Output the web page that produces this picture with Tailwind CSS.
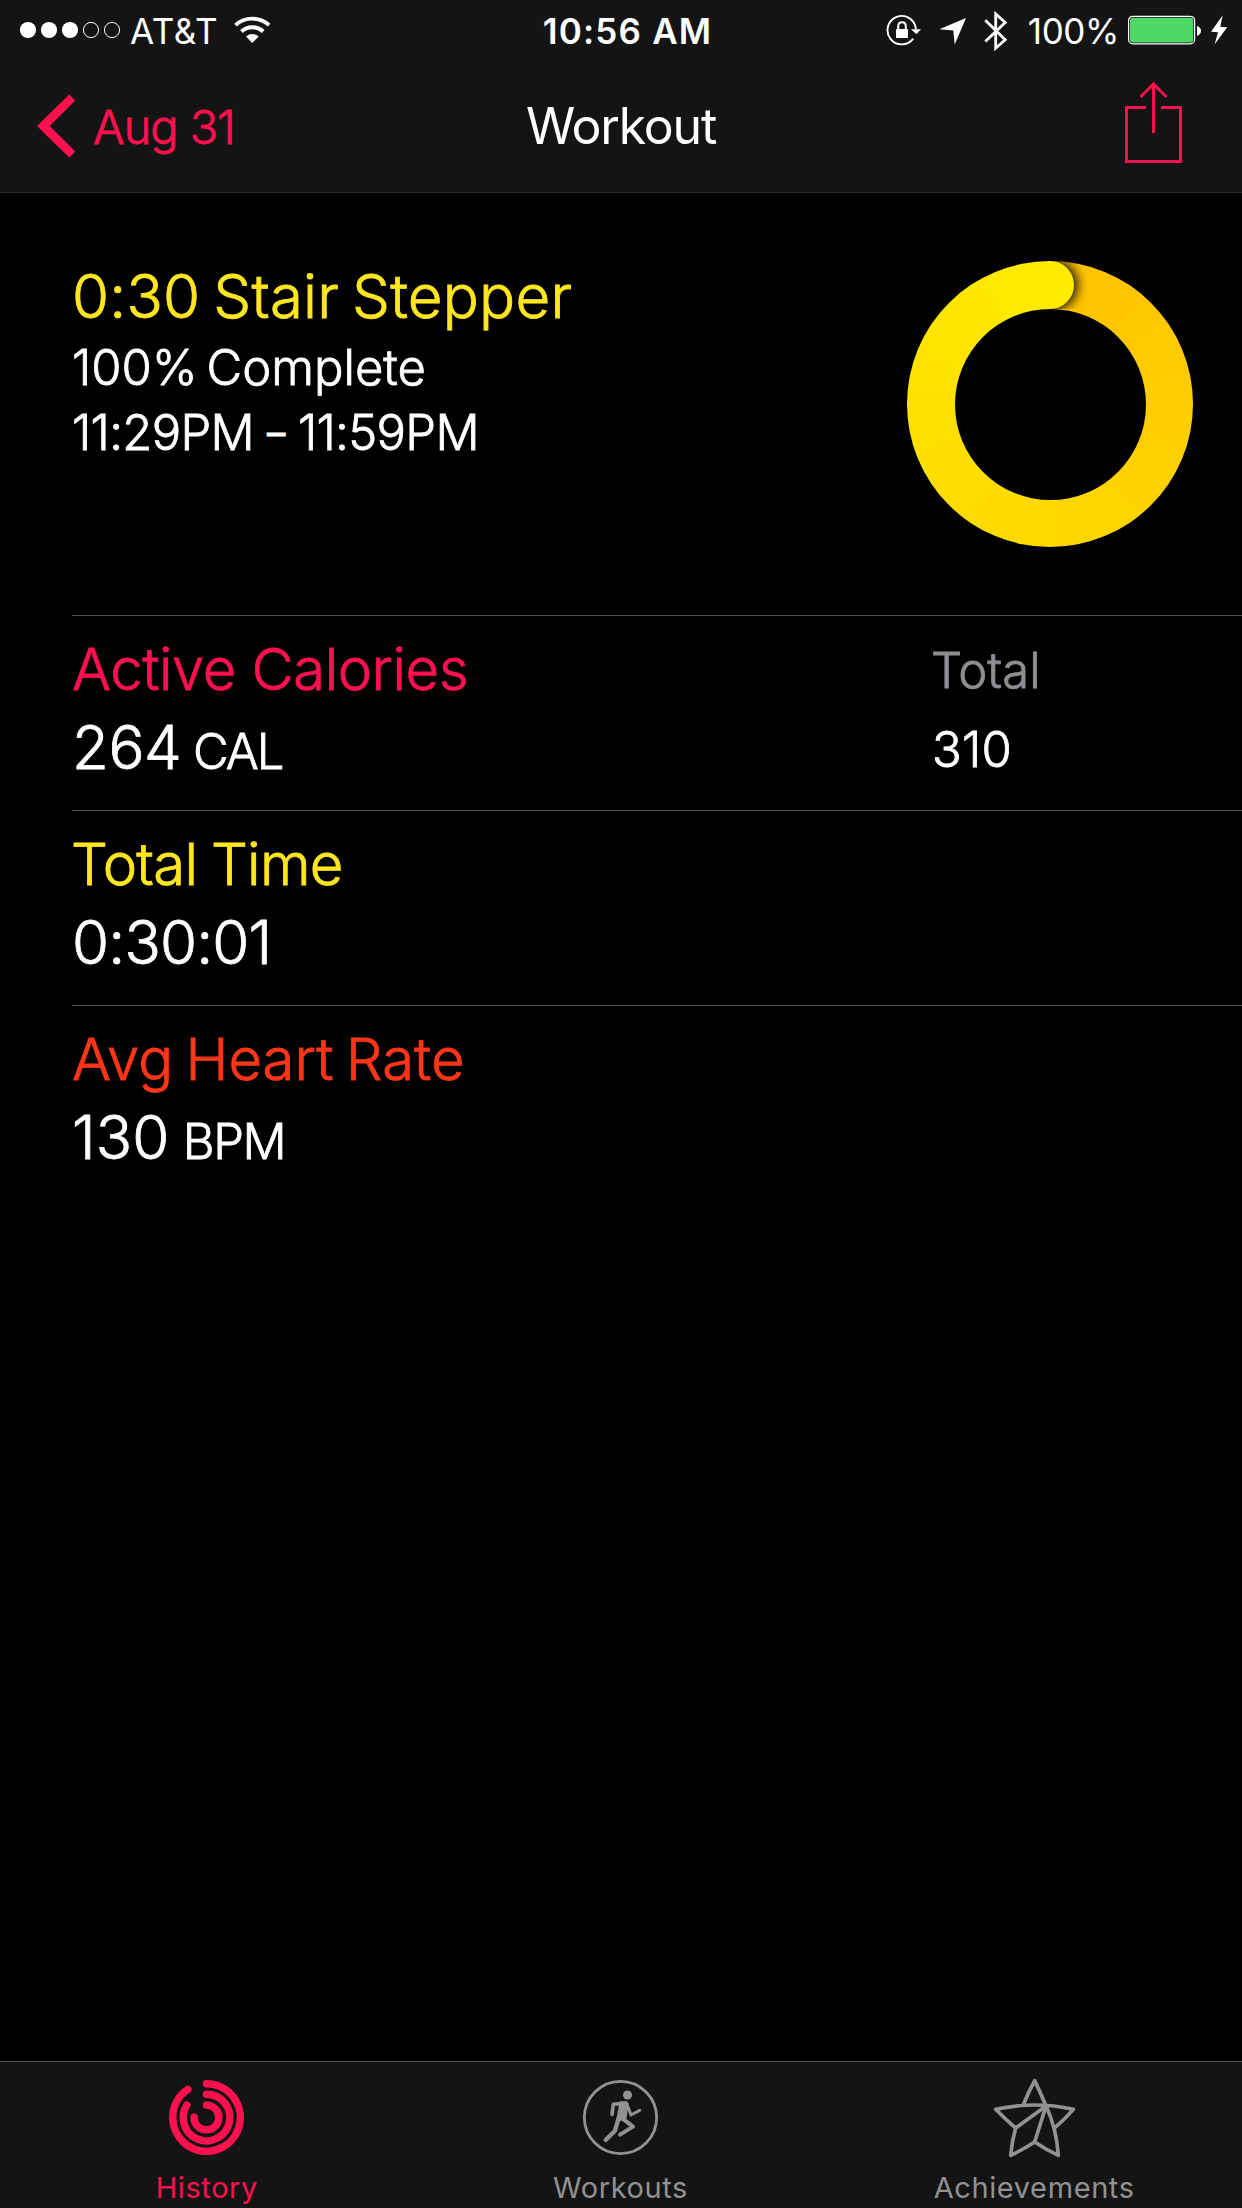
<!DOCTYPE html>
<html lang="en">
<head>
    <meta charset="UTF-8">
    <meta name="viewport" content="width=device-width, initial-scale=1.0">
    <title>Workout</title>
    <script src="https://cdn.jsdelivr.net/npm/@tailwindcss/browser@4"></script>
</head>
<body class="bg-black">
    <div class="w-[1242px] h-[2208px] flex flex-col overflow-hidden bg-black text-white font-['Inter','Liberation_Sans',sans-serif] whitespace-nowrap">

        <header class="h-[193px] shrink-0 bg-[#141414] border-b border-[#262626]">
            <!-- Status bar -->
            <div class="h-[60px] pt-[2px] flex items-center text-[35px] leading-[60px]">
                <div class="w-[414px] flex items-center pl-[19px]">
                    <svg class="w-[101px] h-[18px] -mt-[2px]" viewBox="19 21 101 18">
                        <g fill="#fff">
                            <circle cx="28" cy="30" r="8.1"/>
                            <circle cx="49" cy="30" r="8.1"/>
                            <circle cx="70" cy="30" r="8.1"/>
                        </g>
                        <g fill="none" stroke="#fff">
                            <circle cx="91" cy="30" r="7.6"/>
                            <circle cx="112" cy="30" r="7.6"/>
                        </g>
                    </svg>
                    <span class="ml-[10px] tracking-[0.6px]">AT&amp;T</span>
                    <svg class="w-[38px] h-[28px] ml-[15px] -mt-[2px]" viewBox="233 16 38 28" fill="none" stroke="#fff">
                        <path d="M235.5 25.2A25 25 0 0 1 269.1 25.2" stroke-width="3.8"/>
                        <path d="M241.4 31.4A16.2 16.2 0 0 1 263.2 31.4" stroke-width="4"/>
                        <path d="M252.3 43L246 36.6A9.2 9.2 0 0 1 258.6 36.6Z" fill="#fff" stroke="none"/>
                    </svg>
                </div>
                <div class="w-[414px] pl-[13px] text-center font-semibold tracking-[1.2px]">10:56 AM</div>
                <div class="w-[414px] flex items-center justify-end pr-[14px]">
                    <svg class="w-[36px] h-[32px] -mt-[2px]" viewBox="886 14 36 32">
                        <path d="M913.2 38.6A14.2 14.2 0 1 1 915.9 29" fill="none" stroke="#fff" stroke-width="1.9"/>
                        <path d="M911 29.2H921L917 33.6Q916.3 34.2 915.6 33.6Z" fill="#fff"/>
                        <rect x="896" y="29" width="12" height="9" rx="0.8" fill="#fff"/>
                        <path d="M898.2 30V26.5Q898.2 22.2 902 22.2Q905.8 22.2 905.8 26.5V30" fill="none" stroke="#fff" stroke-width="2"/>
                    </svg>
                    <svg class="w-[28px] h-[28px] ml-[17px] -mt-px" viewBox="939 17 28 28">
                        <path d="M966 18L954.7 44.5L953.3 30.6L939.3 29.3Z" fill="#fff"/>
                    </svg>
                    <svg class="w-[24px] h-[42px] ml-[17px] -mt-px" viewBox="984 9.5 24 42">
                        <path d="M985.3 19.8L1005.2 39.3L995.7 47.7V13.4L1005.2 22L985.3 40.9" fill="none" stroke="#fff" stroke-width="2.8"/>
                    </svg>
                    <span class="ml-[20px] tracking-[-0.4px]">100%</span>
                    <svg class="w-[74px] h-[30px] ml-[9px] -mt-[2px]" viewBox="1128 15.3 74 30">
                        <rect x="1128.6" y="16.6" width="66" height="27.6" rx="4.2" fill="none" stroke="#fff" stroke-width="1.2"/>
                        <rect x="1130" y="18" width="63.3" height="24.8" rx="2.8" fill="#4cd964"/>
                        <path d="M1197 26.2Q1201 27.6 1201 31.1Q1201 34.7 1197 36.2Z" fill="#fff"/>
                    </svg>
                    <svg class="w-[18px] h-[30px] ml-[8px] -mt-[2px]" viewBox="1210 15 18 30">
                        <path d="M1222.7 15.3L1211 31.7L1218 32.3L1214.6 44.5L1227.2 27.3L1220.3 26.7Z" fill="#fff"/>
                    </svg>
                </div>
            </div>
            <!-- Navigation bar -->
            <div class="h-[132px] flex items-center">
                <div class="w-[414px] flex items-center pl-9 text-[#ff1150]">
                    <svg class="w-[40px] h-[64px]" viewBox="36 94.5 40 64">
                        <path d="M69.3 95L75.3 101L49.7 126.5L75.3 152L69.3 158L37 126.5Z" fill="currentColor"/>
                    </svg>
                    <span class="ml-[17px] mt-px text-[47px] leading-[60px] tracking-[-1px] font-light [-webkit-text-stroke:0.8px]">Aug 31</span>
                </div>
                <h1 class="w-[414px] text-center text-[50px] leading-[60px] tracking-[-1.2px]">Workout</h1>
                <div class="w-[414px] flex justify-end pr-[59px]">
                    <svg class="w-[59px] h-[84px] -mt-[7px]" viewBox="1124 81 59 84" fill="none" stroke="#ff1150" stroke-width="3">
                        <path d="M1146 107.5H1126.5V161.5H1180.5V107.5H1161"/>
                        <path d="M1153.5 133V84"/>
                        <path d="M1140.5 97L1153.5 84L1166.5 97"/>
                    </svg>
                </div>
            </div>
        </header>

        <main class="flex-1 pl-[72px] font-light [-webkit-text-stroke:0.8px]">
            <section class="h-[422px] flex justify-between pr-[49px]">
                <div class="pt-[68px]">
                    <h2 class="text-[60px] leading-[70px] tracking-[0.2px] [word-spacing:-4px] text-[#ffe620]">0:30 Stair Stepper</h2>
                    <p class="mt-1 text-[49px] leading-[65px] tracking-[0px] [word-spacing:-5px]">100% Complete</p>
                    <p class="text-[49px] leading-[65px] tracking-[-0.7px] [word-spacing:-3px]">11:29PM <span class="inline-block scale-x-75">–</span> 11:59PM</p>
                </div>
                <!-- Completion ring, closed at 12 o'clock -->
                <div class="relative w-[286px] h-[286px] mt-[68px] rounded-full overflow-hidden bg-[conic-gradient(#ffc200,#ffd800_50%,#ffeb00)]">
                    <div class="absolute left-1/2 top-0 w-[80px] h-[48px] overflow-hidden">
                        <div class="absolute -left-[24px] top-0 w-[48px] h-[48px] rounded-full bg-[#ffeb00] shadow-[2px_0_12px_1px_#000]"></div>
                    </div>
                    <div class="absolute inset-[47.5px] rounded-full bg-black"></div>
                </div>
            </section>

            <section class="h-[195px] flex border-t border-[#545456] pt-[14px]">
                <div class="w-[860px]">
                    <h3 class="text-[58px] leading-[78px] tracking-[-0.5px] text-[#ff1150]">Active Calories</h3>
                    <p class="text-[60px] leading-[78px] tracking-[-0.4px]">264 <span class="text-[49px] tracking-[-2px] -ml-[5px]">CAL</span></p>
                </div>
                <div class="text-[49px]">
                    <h3 class="-ml-px mt-px leading-[80px] text-[#8e8e93]">Total</h3>
                    <p class="leading-[78px] tracking-[0.3px]">310</p>
                </div>
            </section>

            <section class="h-[195px] border-t border-[#545456] pt-[14px]">
                <h3 class="-ml-px text-[58px] leading-[78px] tracking-[-0.7px] [word-spacing:-2px] text-[#ffe620]">Total Time</h3>
                <p class="text-[60px] leading-[78px] tracking-[-0.8px]">0:30:01</p>
            </section>

            <section class="h-[195px] border-t border-[#545456] pt-[14px]">
                <h3 class="text-[58px] leading-[78px] tracking-[0px] [word-spacing:-4px] text-[#ff3519]">Avg Heart Rate</h3>
                <p class="text-[60px] leading-[78px] tracking-[0.2px]">130 <span class="text-[49px] tracking-[-1.4px] -ml-[4px]">BPM</span></p>
            </section>
        </main>

        <!-- Tab bar -->
        <nav class="h-[147px] shrink-0 grid grid-cols-3 pr-px bg-[#141414] border-t border-[#505050] text-[29px] leading-[36px] tracking-[0.6px] text-[#929292]">
            <a class="flex flex-col items-center text-[#ff1150]">
                <svg class="w-[77px] h-[77px] mt-[17px]" viewBox="-38.5 -38.5 77 77" fill="none" stroke="currentColor" stroke-width="7.4" stroke-linecap="round">
                    <path d="M0 -33.8A33.8 33.8 0 1 1 -18.6 -28.2"/>
                    <path d="M0 -23.3A23.3 23.3 0 1 1 -19.7 -12.4"/>
                    <path d="M0 -12.4A12.4 12.4 0 1 1 -12.4 -0.4"/>
                </svg>
                <span class="mt-[14px]">History</span>
            </a>
            <a class="flex flex-col items-center">
                <svg class="w-[77px] h-[77px] mt-[17px]" viewBox="126 87 231 231" fill="none" stroke="currentColor" stroke-linecap="round" stroke-linejoin="round">
                    <circle cx="241.5" cy="202.5" r="108.5" stroke-width="8.5"/>
                    <circle cx="262.5" cy="135" r="13.5" fill="currentColor" stroke="none"/>
                    <path d="M255 159L220 163L216 193" stroke-width="11"/>
                    <path d="M262 166L273 195L299 181" stroke-width="9"/>
                    <path d="M242 157H258Q264 159 262 166L256 205L232 212Z" fill="currentColor" stroke-width="7"/>
                    <path d="M236 204L225 242L197 270" stroke-width="13"/>
                    <path d="M247 205L279 230L240 254" stroke-width="12"/>
                </svg>
                <span class="mt-[14px]">Workouts</span>
            </a>
            <a class="flex flex-col items-center">
                <svg class="w-[83px] h-[81px] mt-[15px]" viewBox="219 81 249 243" fill="none" stroke="currentColor" stroke-width="11" stroke-linecap="round" stroke-linejoin="round">
                    <path d="M311 162Q325 127 344 92Q361 127 378 168Q409 232 415 316Q378 299 344 276Q309 299 272 316Q276 272 287 234Q257 209 227 178Q344 152 460 178Q436 206 405 233"/>
                    <path d="M287 234L378 168L344 276"/>
                </svg>
                <span class="mt-[12px]">Achievements</span>
            </a>
        </nav>
    </div>
</body>
</html>
